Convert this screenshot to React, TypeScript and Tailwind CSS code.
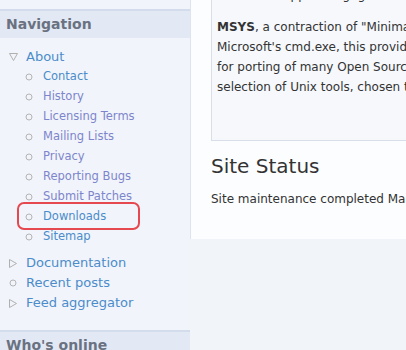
import React from "react";

const font = { fontFamily: '"DejaVu Sans", Verdana, sans-serif' };

function Circle() {
  return (
    <svg width="8" height="8" viewBox="0 0 8 8" className="shrink-0">
      <circle cx="4" cy="4" r="3" fill="none" stroke="#b4b4b4" strokeWidth="1" />
    </svg>
  );
}

function TriDown() {
  return (
    <svg width="9" height="8" viewBox="0 0 9 8" className="shrink-0">
      <path d="M0.5 0.5 H8.5 L4.5 7.5 Z" fill="none" stroke="#b0b0b0" strokeWidth="1" />
    </svg>
  );
}

function TriRight() {
  return (
    <svg width="8" height="9" viewBox="0 0 8 9" className="shrink-0">
      <path d="M0.5 0.5 V8.5 L7.5 4.5 Z" fill="none" stroke="#b0b0b0" strokeWidth="1" />
    </svg>
  );
}

const subs: { label: string; visited: boolean }[] = [
  { label: "Contact", visited: false },
  { label: "History", visited: true },
  { label: "Licensing Terms", visited: true },
  { label: "Mailing Lists", visited: true },
  { label: "Privacy", visited: true },
  { label: "Reporting Bugs", visited: true },
  { label: "Submit Patches", visited: true },
  { label: "Downloads", visited: false },
  { label: "Sitemap", visited: false },
];

export default function App() {
  return (
    <div
      className="relative flex h-[350px] w-[406px] overflow-hidden bg-[#f1f4f9]"
      style={font}
    >
      {/* Sidebar */}
      <div className="h-[350px] w-[190px] shrink-0 overflow-hidden bg-[#f1f4fa]">
        <div className="h-[9px]" />
        <div className="h-[29px] border-t-2 border-[#d3dcea] bg-[#e3e9f4] pl-[6px] text-[14px] font-bold leading-[27px] text-[#6a7282]">
          Navigation
        </div>
        <div className="pt-[9px]">
          <div className="flex h-[20px] items-center">
            <div className="flex w-[26px] justify-center pl-[1px]">
              <TriDown />
            </div>
            <span className="text-[13px] text-[#4b8ccb]">About</span>
          </div>
          {subs.map((s) => (
            <div key={s.label} className="flex h-[20px] items-center">
              <div className="flex w-[43px] justify-center pl-[22px] pr-[7px]">
                <Circle />
              </div>
              <span
                className={
                  "text-[11.5px] " +
                  (s.visited ? "text-[#7d85cc]" : "text-[#4b8ccb]")
                }
              >
                {s.label}
              </span>
            </div>
          ))}
          <div className="h-[6px]" />
          <div className="flex h-[20px] items-center">
            <div className="flex w-[26px] justify-center">
              <TriRight />
            </div>
            <span className="text-[13px] text-[#4b8ccb]">Documentation</span>
          </div>
          <div className="flex h-[20px] items-center">
            <div className="flex w-[26px] justify-center">
              <Circle />
            </div>
            <span className="text-[13px] text-[#4b8ccb]">Recent posts</span>
          </div>
          <div className="flex h-[20px] items-center">
            <div className="flex w-[26px] justify-center">
              <TriRight />
            </div>
            <span className="text-[13px] text-[#4b8ccb]">Feed aggregator</span>
          </div>
        </div>
        <div className="mt-[17px] h-[40px] border-t-2 border-[#d3dcea] bg-[#e3e9f4] pl-[6px] text-[14px] font-bold leading-[27px] text-[#6a7282]">
          Who's online
        </div>
      </div>

      {/* Main */}
      <div className="flex h-[239px] flex-1 flex-col border-l border-[#dde4ee] bg-[#fcfdff] pl-[20px] text-[#333333]">
        <div className="h-[141px] shrink-0 overflow-hidden border-b border-l border-[#d9dfe8] bg-[#f6f8fc] pl-[5px] text-[12px] leading-[20px] whitespace-nowrap">
          <p className="mt-[-15px] mb-[12px]">
            Tools and support (e.g. gcc, binutils) for the
          </p>
          <p>
            <b>MSYS</b>, a contraction of "Minimal SYStem", is a Bourne
          </p>
          <p>Microsoft's cmd.exe, this provides a general purpose</p>
          <p>for porting of many Open Source applications</p>
          <p>selection of Unix tools, chosen to allow building</p>
        </div>
        <h2 className="mt-[12px] text-[20px] leading-[26px] whitespace-nowrap">
          Site Status
        </h2>
        <p className="mt-[10px] text-[12px] leading-[20px] whitespace-nowrap">
          Site maintenance completed March 2015
        </p>
      </div>

      {/* Annotation highlight */}
      <div className="pointer-events-none absolute left-[17px] top-[202px] h-[28px] w-[123px] rounded-[7px] border-2 border-[#e6484f]" />
    </div>
  );
}
